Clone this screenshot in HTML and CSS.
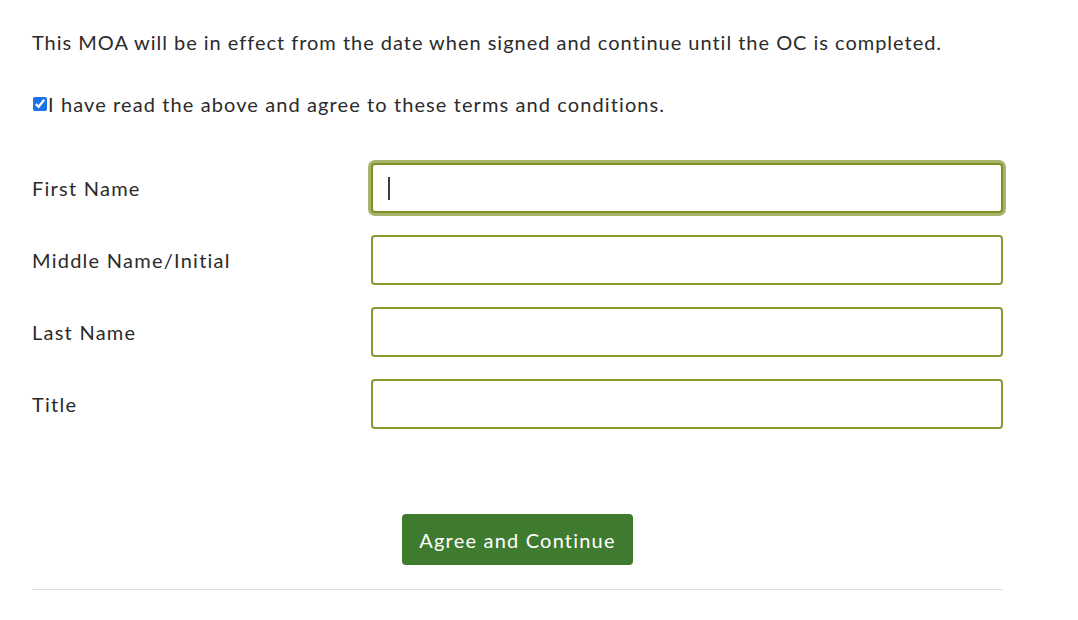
FILE: index.html
```html
<!DOCTYPE html>
<html>
<head>
<meta charset="utf-8">
<link rel="stylesheet" href="styles.css">
</head>
<body>
<div class="page">
  <p class="intro">This MOA will be in effect from the date when signed and continue until the OC is completed.</p>
  <label class="agree"><input type="checkbox" checked>I have read the above and agree to these terms and conditions.</label>
  <div class="form">
    <label class="lbl">First Name</label>
    <div class="field focused"><span class="caret"></span></div>
    <label class="lbl">Middle Name/Initial</label>
    <div class="field"></div>
    <label class="lbl">Last Name</label>
    <div class="field"></div>
    <label class="lbl">Title</label>
    <div class="field"></div>
  </div>
  <div class="actions">
    <button class="btn">Agree and Continue</button>
  </div>
  <hr class="rule">
</div>
</body>
</html>
```

FILE: styles.css
```css
html, body {
  margin: 0;
  padding: 0;
  background: #fff;
}
body {
  font-family: "Lato", "Noto Sans", sans-serif;
  color: #2b2b2b;
  font-size: 20px;
}
.page {
  width: 971px;
  padding: 30px 0 0 32px;
}
.intro {
  margin: 0;
  line-height: 24px;
  letter-spacing: 0.98px;
}
.agree {
  display: flex;
  align-items: center;
  margin-top: 38px;
  line-height: 24px;
  letter-spacing: 1.1px;
}
.agree input {
  margin: 0 1px 0 1px;
  width: 14px;
  height: 14px;
  accent-color: #1a73e8;
}
.form {
  display: grid;
  grid-template-columns: 339px 1fr;
  row-gap: 22px;
  align-items: center;
  margin-top: 47px;
}
.lbl {
  letter-spacing: 1.25px;
}
.field {
  height: 46px;
  border: 2px solid #88992e;
  border-radius: 4px;
  background: #fff;
  display: flex;
  align-items: center;
}
.field.focused {
  box-shadow: 0 0 0 3px #a9b46b;
  border-color: #7f9026;
}
.caret {
  width: 2px;
  height: 23px;
  background: #3a3d42;
  margin-left: 15px;
}
.actions {
  display: flex;
  padding-left: 370px;
  margin-top: 85px;
}
.btn {
  font-family: inherit;
  font-size: 20px;
  color: #fff;
  background: #3f7b2f;
  border: none;
  border-radius: 4px;
  width: 231px;
  height: 51px;
  padding: 0;
  letter-spacing: 1.2px;
}
.rule {
  margin: 24px 0 0 0;
  border: none;
  border-top: 1px solid #dedede;
}
```
